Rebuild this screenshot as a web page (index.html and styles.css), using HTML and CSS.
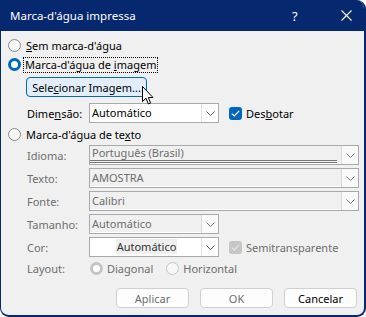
FILE: index.html
```html
<!DOCTYPE html>
<html lang="pt-BR">
<head>
    <meta charset="UTF-8">
    <title>Marca-d'água impressa</title>
    <link rel="stylesheet" href="styles.css">
</head>
<body>
    <div class="window">
        <div class="titlebar">
            <span class="title">Marca-d'água impressa</span>
            <span class="help">?</span>
            <span class="close">
                <svg width="11" height="11" viewBox="0 0 11 11"><path d="M0.5 0.5 L10.5 10.5 M10.5 0.5 L0.5 10.5" stroke="#fff" stroke-width="1.1" fill="none"/></svg>
            </span>
        </div>

        <div class="content">
            <div class="radio-row">
                <span class="radio"></span>
                <span><u>S</u>em marca-d'água</span>
            </div>
            <div class="radio-row tight">
                <span class="radio checked"></span>
                <span class="focus">Marca-d'água de <u>i</u>magem</span>
            </div>

            <div class="btn-row">
                <button class="btn-select">Sele<u>c</u>ionar Imagem...</button>
                <!-- mouse pointer over the button -->
                <svg class="pointer" width="13" height="20" viewBox="0 0 13 20">
                    <path d="M0.5 0.5 L0.5 15.5 L4 12.2 L6.4 18 L8.6 17 L6.3 11.5 L11 11.5 Z" fill="#fff" stroke="#000" stroke-width="1" stroke-linejoin="round"/>
                </svg>
            </div>

            <div class="field-row">
                <span class="field-label">Dime<u>n</u>são:</span>
                <div class="select short">
                    <span class="value">Automático</span>
                    <span class="arrow"><svg width="9" height="5" viewBox="0 0 9 5"><path d="M0.5 0.5 L4.5 4.5 L8.5 0.5" stroke="#555" fill="none"/></svg></span>
                </div>
                <span class="check on"><svg width="9" height="7" viewBox="0 0 9 7"><path d="M0.8 3.6 L3.3 6 L8.2 0.8" stroke="#fff" stroke-width="1.2" fill="none"/></svg></span>
                <span class="check-text">Des<u>b</u>otar</span>
            </div>

            <div class="radio-row text-mark">
                <span class="radio"></span>
                <span>Marca-d'água de te<u>x</u>to</span>
            </div>

            <div class="field-row disabled first">
                <span class="field-label">Idioma:</span>
                <div class="select wide off">
                    <span class="value underlined">Português (Brasil)</span>
                    <span class="arrow"><svg width="9" height="5" viewBox="0 0 9 5"><path d="M0.5 0.5 L4.5 4.5 L8.5 0.5" stroke="#777" fill="none"/></svg></span>
                </div>
            </div>
            <div class="field-row disabled">
                <span class="field-label">Texto:</span>
                <div class="select wide off">
                    <span class="value">AMOSTRA</span>
                    <span class="arrow"><svg width="9" height="5" viewBox="0 0 9 5"><path d="M0.5 0.5 L4.5 4.5 L8.5 0.5" stroke="#777" fill="none"/></svg></span>
                </div>
            </div>
            <div class="field-row disabled">
                <span class="field-label">Fonte:</span>
                <div class="select wide off">
                    <span class="value">Calibri</span>
                    <span class="arrow"><svg width="9" height="5" viewBox="0 0 9 5"><path d="M0.5 0.5 L4.5 4.5 L8.5 0.5" stroke="#777" fill="none"/></svg></span>
                </div>
            </div>
            <div class="field-row disabled">
                <span class="field-label">Tamanho:</span>
                <div class="select short off">
                    <span class="value">Automático</span>
                    <span class="arrow"><svg width="9" height="5" viewBox="0 0 9 5"><path d="M0.5 0.5 L4.5 4.5 L8.5 0.5" stroke="#777" fill="none"/></svg></span>
                </div>
            </div>
            <div class="field-row disabled">
                <span class="field-label">Cor:</span>
                <div class="select short color">
                    <span class="value"><span class="swatch">Automático</span></span>
                    <span class="arrow"><svg width="9" height="5" viewBox="0 0 9 5"><path d="M0.5 0.5 L4.5 4.5 L8.5 0.5" stroke="#555" fill="none"/></svg></span>
                </div>
                <span class="check dim"><svg width="9" height="7" viewBox="0 0 9 7"><path d="M0.8 3.6 L3.3 6 L8.2 0.8" stroke="#e6e6e6" stroke-width="1.2" fill="none"/></svg></span>
                <span class="check-text">Semitransparente</span>
            </div>

            <div class="field-row disabled layout-row">
                <span class="field-label">Layout:</span>
                <span class="radio dim selected"></span>
                <span class="opt">Diagonal</span>
                <span class="radio dim"></span>
                <span class="opt">Horizontal</span>
            </div>

            <div class="actions">
                <button class="btn off">Aplicar</button>
                <button class="btn off">OK</button>
                <button class="btn">Cancelar</button>
            </div>
        </div>
    </div>
</body>
</html>
```

FILE: styles.css
```css
* {
    margin: 0;
    padding: 0;
    box-sizing: border-box;
}

body {
    font-family: "Noto Sans", "Open Sans", sans-serif;
    font-size: 11px;
    color: #000;
    background: #fff;
}

u {
    text-decoration: underline;
    text-underline-offset: 1px;
}

.window {
    width: 366px;
    height: 317px;
    background: #f0f0f0;
    border: 2px solid #06286e;
    border-left-width: 1px;
    border-top: 0;
    border-radius: 0 9px 9px 9px;
    overflow: hidden;
    display: flex;
    flex-direction: column;
}

/* Title bar */
.titlebar {
    height: 31px;
    background: #06286e;
    color: #fff;
    display: flex;
    align-items: center;
    padding-left: 9px;
    font-size: 11.5px;
}

.title {
    flex: 1;
}

.help {
    width: 14px;
    margin-right: 35px;
    font-size: 13px;
}

.close {
    display: flex;
    margin-right: 12px;
}

/* Body */
.content {
    padding: 5px 0 0 6px;
    display: flex;
    flex-direction: column;
}

.radio-row {
    height: 19px;
    display: flex;
    align-items: center;
    gap: 5px;
    padding-left: 1px;
}

.radio-row.tight {
    gap: 2px;
}

.radio-row.text-mark {
    margin-top: 2px;
}

.radio {
    width: 13px;
    height: 13px;
    border-radius: 50%;
    border: 1px solid #8a8a8a;
    background: #f7f7f7;
    flex-shrink: 0;
}

.radio.checked {
    border: 3.5px solid #0067c0;
    background: #fff;
}

.radio.dim {
    border-color: #c4c4c4;
    background: #f7f7f7;
}

.radio.dim.selected {
    border: 3.5px solid #c4c4c4;
    background: #fff;
}

.focus {
    border: 1px dotted #000;
    padding: 0 1px;
    line-height: 14px;
}

/* Select image button */
.btn-row {
    margin-top: 3px;
    padding-left: 19px;
    height: 20px;
    display: flex;
    position: relative;
}

.btn-select {
    width: 121px;
    height: 20px;
    font: inherit;
    color: #000;
    border: 1px solid #0067c0;
    border-radius: 4px;
    background: #e1eefa;
}

.pointer {
    position: absolute;
    left: 135px;
    top: 9px;
}

/* Label + field rows */
.field-row {
    height: 20px;
    margin-top: 3px;
    padding-left: 20px;
    display: flex;
    align-items: center;
}

.field-row.first {
    margin-top: 1px;
}

.btn-row + .field-row {
    margin-top: 6px;
}

.field-label {
    width: 62px;
    flex-shrink: 0;
}

.disabled .field-label,
.disabled .check-text,
.disabled .opt {
    color: #6d6d6d;
}

.select {
    height: 20px;
    display: flex;
    border: 1px solid #a9a9a9;
    background: #fff;
}

.select.short {
    width: 130px;
}

.select.wide {
    width: 270px;
}

.select.off {
    background: #f0f0f0;
    color: #6d6d6d;
    box-shadow: inset 0 -1px 0 #fff;
}

.select .value {
    flex: 1;
    padding-left: 2px;
    line-height: 17px;
    white-space: nowrap;
    overflow: hidden;
}

.select .value.underlined {
    border-bottom: 3px double #777;
    line-height: 14px;
    height: 17px;
    margin-right: 4px;
}

.select .arrow {
    width: 17px;
    display: flex;
    align-items: center;
    justify-content: center;
    border-left: 1px solid #e3e3e3;
    background: #fff;
}

.select.off .arrow {
    background: #f9f9f9;
    border-left-color: #d9d9d9;
}

.select.color .value {
    text-align: center;
    color: #333;
}

.swatch {
    background: #efefef;
    padding: 0 1px;
}

.check {
    width: 13px;
    height: 13px;
    border-radius: 3px;
    margin-left: 10px;
    margin-right: 4px;
    display: flex;
    align-items: center;
    justify-content: center;
    flex-shrink: 0;
}

.check.on {
    background: #0067c0;
}

.check.dim {
    background: #c6c6c6;
}

/* Layout options */
.layout-row {
    margin-top: 2px;
    height: 19px;
}

.layout-row .field-label {
    width: 63px;
}

.opt {
    margin-left: 4px;
    margin-right: 13px;
}

/* Dialog buttons */
.actions {
    margin-top: 10px;
    padding-right: 7px;
    display: flex;
    justify-content: flex-end;
    gap: 11px;
}

.btn {
    width: 73px;
    height: 20px;
    font: inherit;
    color: #000;
    background: #fdfdfd;
    border: 1px solid #d0d0d0;
    border-radius: 4px;
}

.btn.off {
    color: #6d6d6d;
}
```
